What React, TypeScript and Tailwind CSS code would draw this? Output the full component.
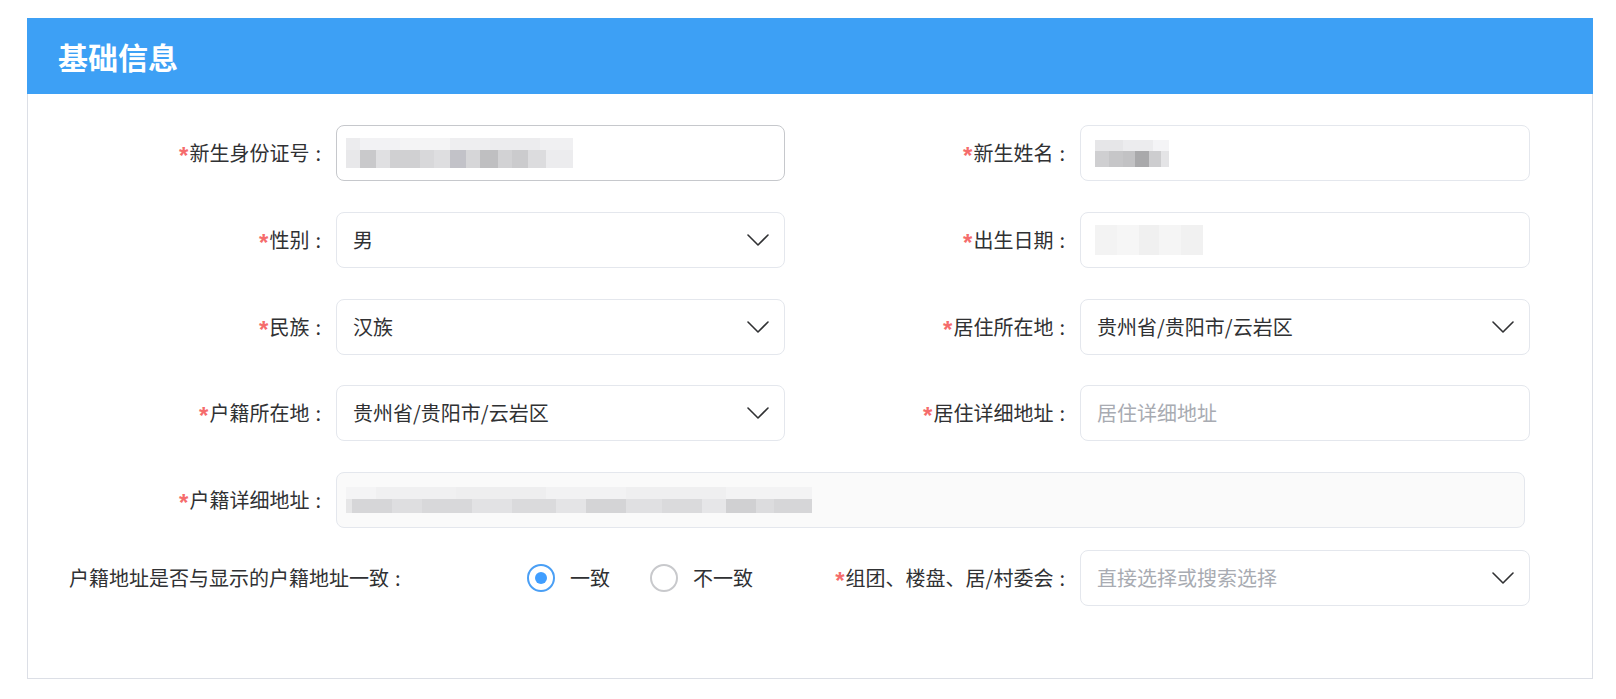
import React from "react";

const Chevron = () => (
  <svg width="22" height="12" viewBox="0 0 22 12" fill="none" className="shrink-0">
    <path d="M1 1 L11 11 L21 1" stroke="#303133" strokeWidth="1.6" strokeLinecap="round" strokeLinejoin="round" />
  </svg>
);

const Label = ({ text, w }: { text: string; w: string }) => (
  <div className={`${w} h-full flex items-center justify-end pr-[15px] text-[20px] text-[#303133] whitespace-nowrap`}>
    <span className="text-[#f56c6c] mr-[1px] text-[24px] font-bold font-['Liberation_Sans',sans-serif] relative top-[3px]">*</span>
    <span>{text}</span>
    <span className="ml-[6px]">:</span>
  </div>
);

const Cells = ({ cells, h }: { cells: [number, string][]; h: string }) => (
  <div className={`flex ${h}`}>
    {cells.map(([w, c], i) => (
      <div key={i} style={{ width: w, background: c }} />
    ))}
  </div>
);

const Select = ({ value, placeholder, w, dark }: { value?: string; placeholder?: string; w: string; dark?: boolean }) => (
  <div
    className={`${w} h-full rounded-[8px] border ${dark ? "border-[#c6c8cc]" : "border-[#e4e7ed]"} bg-white flex items-center pl-[16px] pr-[15px] text-[20px]`}
  >
    <span className={`flex-1 ${value ? "text-[#303133]" : "text-[#a8abb2]"}`}>{value ?? placeholder}</span>
    <Chevron />
  </div>
);

export default function App() {
  return (
    <div className="min-h-screen bg-white pt-[18px] pl-[27px] font-['Noto_Sans_CJK_SC','Microsoft_YaHei',sans-serif] leading-none">
      <div className="w-[1566px]">
        <div className="h-[76px] bg-[#3da0f5] flex items-center pl-[31px]">
          <span className="text-white text-[30px] font-bold tracking-[0px]">基础信息</span>
        </div>
        <div className="h-[585px] border-x border-b border-[#dcdfe6] pt-[31px] flex flex-col">
          {/* Row 1 */}
          <div className="flex h-[56px] shrink-0">
            <Label text="新生身份证号" w="w-[308px]" />
            <div className="w-[449px] h-full rounded-[8px] border border-[#c6c8cc] bg-white flex items-center pl-[9px]">
              <div className="flex flex-col w-[227px]">
                <Cells
                  h="h-[12px]"
                  cells={[
                    [14, "#ececee"],
                    [40, "#f2f2f4"],
                    [50, "#f4f4f5"],
                    [40, "#eeeef0"],
                    [50, "#ececee"],
                    [33, "#f0f0f2"],
                  ]}
                />
                <Cells
                  h="h-[18px]"
                  cells={[
                    [14, "#e8e8ea"],
                    [16, "#c9c9cb"],
                    [14, "#e0e0e2"],
                    [30, "#d0d0d2"],
                    [14, "#d8d8da"],
                    [16, "#dedee0"],
                    [16, "#c2c2c8"],
                    [14, "#d6d6d8"],
                    [18, "#bfbfc1"],
                    [14, "#d2d2d4"],
                    [16, "#cbcbcd"],
                    [18, "#dcdcde"],
                    [27, "#ececee"],
                  ]}
                />
              </div>
            </div>
            <Label text="新生姓名" w="w-[295px]" />
            <div className="w-[450px] h-full rounded-[8px] border border-[#e4e7ed] bg-white flex items-center pl-[14px]">
              <div className="flex flex-col w-[74px]">
                <Cells h="h-[11px]" cells={[[28, "#e6e6e8"], [30, "#ececee"], [16, "#f4f4f6"]]} />
                <Cells
                  h="h-[16px]"
                  cells={[
                    [14, "#cfcfd1"],
                    [14, "#c6c6c8"],
                    [12, "#c2c2c4"],
                    [14, "#a9a9ab"],
                    [12, "#cdcdcf"],
                    [8, "#e4e4e6"],
                  ]}
                />
              </div>
            </div>
          </div>

          {/* Row 2 */}
          <div className="flex h-[56px] shrink-0 mt-[30.75px]">
            <Label text="性别" w="w-[308px]" />
            <Select value="男" w="w-[449px]" />
            <Label text="出生日期" w="w-[295px]" />
            <div className="w-[450px] h-full rounded-[8px] border border-[#e4e7ed] bg-white flex items-center pl-[14px]">
              <Cells
                h="h-[30px]"
                cells={[
                  [22, "#f3f3f3"],
                  [22, "#f6f6f6"],
                  [20, "#f0f0f0"],
                  [22, "#f5f5f5"],
                  [22, "#f1f1f1"],
                ]}
              />
            </div>
          </div>

          {/* Row 3 */}
          <div className="flex h-[56px] shrink-0 mt-[30.75px]">
            <Label text="民族" w="w-[308px]" />
            <Select value="汉族" w="w-[449px]" />
            <Label text="居住所在地" w="w-[295px]" />
            <Select value="贵州省/贵阳市/云岩区" w="w-[450px]" />
          </div>

          {/* Row 4 */}
          <div className="flex h-[56px] shrink-0 mt-[30.75px]">
            <Label text="户籍所在地" w="w-[308px]" />
            <Select value="贵州省/贵阳市/云岩区" w="w-[449px]" />
            <Label text="居住详细地址" w="w-[295px]" />
            <div className="w-[450px] h-full rounded-[8px] border border-[#e4e7ed] bg-white flex items-center pl-[16px] text-[20px] text-[#a8abb2]">
              居住详细地址
            </div>
          </div>

          {/* Row 5 */}
          <div className="flex h-[56px] shrink-0 mt-[30.75px]">
            <Label text="户籍详细地址" w="w-[308px]" />
            <div className="w-[1189px] h-full rounded-[8px] border border-[#e4e7ed] bg-[#fafafa] flex items-center pl-[9px]">
              <div className="flex flex-col w-[466px]">
                <Cells
                  h="h-[12px]"
                  cells={[
                    [30, "#f4f4f5"],
                    [80, "#f0f0f1"],
                    [90, "#eeeeef"],
                    [80, "#f2f2f3"],
                    [100, "#efeff0"],
                    [86, "#f3f3f4"],
                  ]}
                />
                <Cells
                  h="h-[14px]"
                  cells={[
                    [6, "#e6e6e7"],
                    [40, "#d6d6d8"],
                    [30, "#dedee0"],
                    [50, "#d8d8da"],
                    [40, "#e2e2e4"],
                    [44, "#dadadc"],
                    [30, "#e4e4e6"],
                    [40, "#d4d4d6"],
                    [36, "#e0e0e2"],
                    [40, "#dadadc"],
                    [24, "#e6e6e8"],
                    [30, "#d0d0d2"],
                    [18, "#dcdcde"],
                    [38, "#d6d6d8"],
                  ]}
                />
              </div>
            </div>
          </div>

          {/* Row 6 */}
          <div className="flex h-[56px] shrink-0 mt-[22px]">
            <div className="w-[499px] h-full flex items-center pl-[41px] text-[20px] text-[#303133] whitespace-nowrap">
              户籍地址是否与显示的户籍地址一致<span className="ml-[6px]">:</span>
            </div>
            <div className="w-[258px] h-full flex items-center text-[20px] text-[#303133]">
              <div className="w-[28px] h-[28px] rounded-full border-2 border-[#4a9ff5] flex items-center justify-center shrink-0">
                <div className="w-[12px] h-[12px] rounded-full bg-[#409eff]" />
              </div>
              <span className="ml-[15px]">一致</span>
              <div className="ml-[40px] w-[28px] h-[28px] rounded-full border-2 border-[#c8c9cc] shrink-0" />
              <span className="ml-[15px]">不一致</span>
            </div>
            <Label text="组团、楼盘、居/村委会" w="w-[295px]" />
            <Select placeholder="直接选择或搜索选择" w="w-[450px]" />
          </div>
        </div>
      </div>
    </div>
  );
}
